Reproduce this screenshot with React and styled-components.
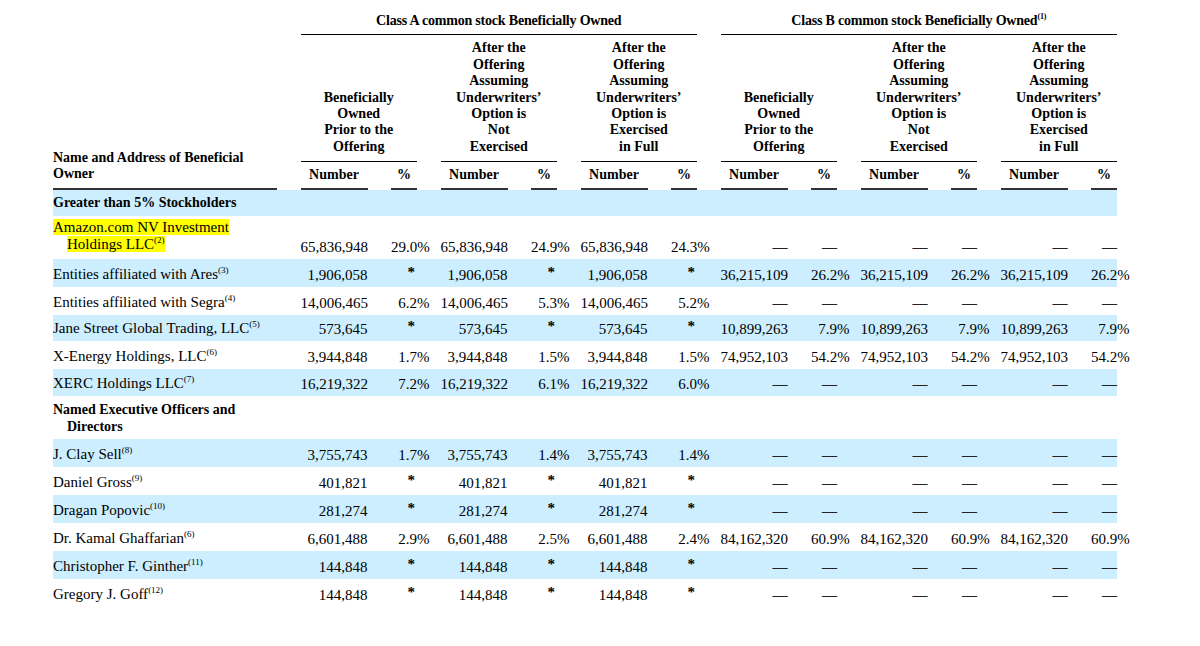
import React from "react";
import styled, { createGlobalStyle } from "styled-components";

const Global = createGlobalStyle`
  body { margin: 0; background: #fff; font-family: "Liberation Serif", "Times New Roman", serif; color: #000; }
`;

const COLS = "224px repeat(6, 67px 26px)";

const Page = styled.div`
  padding: 0 0 0 53px;
  width: 1147px;
`;

const Grid = styled.div`
  display: grid;
  grid-template-columns: ${COLS};
  column-gap: 23.5px;
  width: 1064px;
`;

const Head = styled(Grid)`
  font-weight: bold;
  font-size: 14px;
  line-height: 16.4px;
`;

const GroupTitle = styled.div`
  grid-column: ${(p) => p.$span};
  grid-row: 1;
  text-align: center;
  padding-top: 13px;
  padding-bottom: 5px;
  border-bottom: 1px solid #000;
  letter-spacing: -0.2px;
  sup { font-size: 8px; line-height: 0; vertical-align: 6px; }
`;

const NameHead = styled.div`
  grid-column: 1;
  grid-row: 1 / span 3;
  align-self: end;
  padding-bottom: 5px;
  border-bottom: 2px solid #333;
`;

const SubHead = styled.div`
  grid-column: ${(p) => p.$span};
  grid-row: 2;
  text-align: center;
  align-self: end;
  margin-top: 5px;
  padding-bottom: 6px;
  border-bottom: 1px solid #000;
`;

const ColHead = styled.div`
  grid-row: 3;
  text-align: center;
  padding: 5px 0 4px;
  border-bottom: 2px solid #333;
`;

const Row = styled(Grid)`
  background: ${(p) => (p.$band ? "#cceeff" : "#fff")};
  min-height: ${(p) => p.$h || 28}px;
  font-size: 15px;
  line-height: 17px;
  align-items: end;
`;

const Name = styled.div`
  padding: 0 0 ${(p) => p.$pb ?? 4}px 14px;
  text-indent: -14px;
  align-self: ${(p) => (p.$top ? "start" : "end")};
  padding-top: ${(p) => (p.$top ? 5 : 0)}px;
  font-weight: ${(p) => (p.$bold ? "bold" : "normal")};
  font-size: ${(p) => (p.$bold ? 14 : 15)}px;
  sup { font-size: 9px; line-height: 0; vertical-align: 6px; }
`;

const Hl = styled.span`
  background: #ffff00;
  box-decoration-break: clone;
  -webkit-box-decoration-break: clone;
`;

const Cell = styled.div`
  text-align: right;
  white-space: nowrap;
  padding-bottom: 3px;
  color: ${(p) => (p.$dash ? "#222" : "#000")};
  font-weight: ${(p) => (p.$dash ? "bold" : "normal")};
`;

const PctSign = styled.span`
  display: inline-block;
  width: 0;
  overflow: visible;
`;

const Star = styled.span`
  font-size: 15px;
  font-weight: bold;
  position: relative;
  top: -3px;
  padding-right: 2px;
`;

function Val({ v, pct }) {
  if (v === "-") return <Cell $dash>—</Cell>;
  if (v === "*") return <Cell><Star>*</Star></Cell>;
  if (v === "") return <Cell />;
  if (pct) return <Cell>{v}<PctSign>%</PctSign></Cell>;
  return <Cell>{v}</Cell>;
}

const D = ["-", "-", "-", "-", "-", "-"];
const rows = [
  { n: "Amazon.com NV Investment Holdings LLC", s: "(2)", hl: true, a: ["65,836,948", "29.0", "65,836,948", "24.9", "65,836,948", "24.3"], b: D, h: 43 },
  { n: "Entities affiliated with Ares", s: "(3)", a: ["1,906,058", "*", "1,906,058", "*", "1,906,058", "*"], b: ["36,215,109", "26.2", "36,215,109", "26.2", "36,215,109", "26.2"] },
  { n: "Entities affiliated with Segra", s: "(4)", a: ["14,006,465", "6.2", "14,006,465", "5.3", "14,006,465", "5.2"], b: D },
  { n: "Jane Street Global Trading, LLC", s: "(5)", a: ["573,645", "*", "573,645", "*", "573,645", "*"], b: ["10,899,263", "7.9", "10,899,263", "7.9", "10,899,263", "7.9"], h: 26 },
  { n: "X-Energy Holdings, LLC", s: "(6)", a: ["3,944,848", "1.7", "3,944,848", "1.5", "3,944,848", "1.5"], b: ["74,952,103", "54.2", "74,952,103", "54.2", "74,952,103", "54.2"] },
  { n: "XERC Holdings LLC", s: "(7)", a: ["16,219,322", "7.2", "16,219,322", "6.1", "16,219,322", "6.0"], b: D, h: 27 },
  { section: "Named Executive Officers and Directors", h: 42 },
  { n: "J. Clay Sell", s: "(8)", a: ["3,755,743", "1.7", "3,755,743", "1.4", "3,755,743", "1.4"], b: D },
  { n: "Daniel Gross", s: "(9)", a: ["401,821", "*", "401,821", "*", "401,821", "*"], b: D },
  { n: "Dragan Popovic", s: "(10)", a: ["281,274", "*", "281,274", "*", "281,274", "*"], b: D },
  { n: "Dr. Kamal Ghaffarian", s: "(6)", a: ["6,601,488", "2.9", "6,601,488", "2.5", "6,601,488", "2.4"], b: ["84,162,320", "60.9", "84,162,320", "60.9", "84,162,320", "60.9"] },
  { n: "Christopher F. Ginther", s: "(11)", a: ["144,848", "*", "144,848", "*", "144,848", "*"], b: D },
  { n: "Gregory J. Goff", s: "(12)", a: ["144,848", "*", "144,848", "*", "144,848", "*"], b: D },
];

const subs = [
  ["Beneficially", "Owned", "Prior to the", "Offering"],
  ["After the", "Offering", "Assuming", "Underwriters’", "Option is", "Not", "Exercised"],
  ["After the", "Offering", "Assuming", "Underwriters’", "Option is", "Exercised", "in Full"],
];

export default function App() {
  return (
    <Page>
      <Global />
      <Head>
        <GroupTitle $span="2 / span 6">Class A common stock Beneficially Owned</GroupTitle>
        <GroupTitle $span="8 / span 6">Class B common stock Beneficially Owned<sup>(1)</sup></GroupTitle>
        <NameHead>Name and Address of Beneficial<br />Owner</NameHead>
        {[0, 1, 2, 3, 4, 5].map((i) => (
          <SubHead key={i} $span={`${2 + i * 2} / span 2`}>
            {subs[i % 3].map((l, j) => <div key={j}>{l}</div>)}
          </SubHead>
        ))}
        {Array.from({ length: 12 }).map((_, i) => (
          <ColHead key={i} style={{ gridColumn: i + 2 }}>{i % 2 ? "%" : "Number"}</ColHead>
        ))}
      </Head>
      <Row $band $h={26}>
        <Name $bold $pb={5}>Greater than 5% Stockholders</Name>
      </Row>
      {rows.map((r, i) =>
        r.section ? (
          <Row key={i} $h={r.h}>
            <Name $bold $top>{r.section}</Name>
          </Row>
        ) : (
          <Row key={i} $band={i % 2 === 1} $h={r.h}>
            <Name $pb={r.hl ? 6 : 4}>
              {r.hl ? <Hl>{r.n}<sup>{r.s}</sup></Hl> : <>{r.n}<sup>{r.s}</sup></>}
            </Name>
            {[...r.a, ...r.b].map((v, j) => <Val key={j} v={v} pct={j % 2 === 1} />)}
          </Row>
        )
      )}
    </Page>
  );
}
